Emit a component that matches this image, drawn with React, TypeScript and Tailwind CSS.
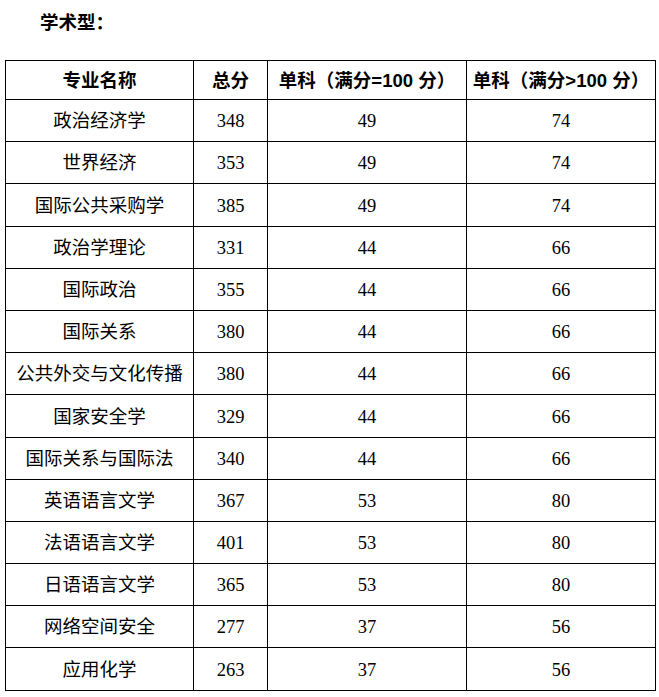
const rows: [string, number, number, number][] = [
  ["政治经济学", 348, 49, 74],
  ["世界经济", 353, 49, 74],
  ["国际公共采购学", 385, 49, 74],
  ["政治学理论", 331, 44, 66],
  ["国际政治", 355, 44, 66],
  ["国际关系", 380, 44, 66],
  ["公共外交与文化传播", 380, 44, 66],
  ["国家安全学", 329, 44, 66],
  ["国际关系与国际法", 340, 44, 66],
  ["英语语言文学", 367, 53, 80],
  ["法语语言文学", 401, 53, 80],
  ["日语语言文学", 365, 53, 80],
  ["网络空间安全", 277, 37, 56],
  ["应用化学", 263, 37, 56],
];

const serif = "font-['Liberation_Serif','Noto_Sans_CJK_SC',serif]";
const sans = "font-['Liberation_Sans','Noto_Sans_CJK_SC',sans-serif]";

export default function App() {
  return (
    <div className="w-[659px] h-[697px] bg-white text-black">
      <div className={`pl-[40px] pt-[9px] h-[60px] text-[18.5px] font-bold ${sans}`}>
        学术型：
      </div>
      <table className="ml-[5px] w-[650px] border-collapse table-fixed">
        <colgroup>
          <col className="w-[188px]" />
          <col className="w-[74px]" />
          <col className="w-[199px]" />
          <col className="w-[189px]" />
        </colgroup>
        <thead>
          <tr className={`h-[39px] text-[18.5px] font-bold ${sans}`}>
            <th className="border-[1.5px] border-black p-0 pt-[2px] text-center">专业名称</th>
            <th className="border-[1.5px] border-black p-0 pt-[2px] text-center">总分</th>
            <th className="border-[1.5px] border-black p-0 pt-[2px] text-center whitespace-nowrap">
              单科（满分=100 分）
            </th>
            <th className="border-[1.5px] border-black p-0 pt-[2px] text-center whitespace-nowrap">
              单科（满分&gt;100 分）
            </th>
          </tr>
        </thead>
        <tbody>
          {rows.map(([name, total, a, b]) => (
            <tr key={name} className={`h-[42.2px] text-[18.5px] ${serif}`}>
              <td className="border-[1.5px] border-black p-0 pt-[3px] text-center whitespace-nowrap">{name}</td>
              <td className="border-[1.5px] border-black p-0 pt-[3px] text-center">{total}</td>
              <td className="border-[1.5px] border-black p-0 pt-[3px] text-center">{a}</td>
              <td className="border-[1.5px] border-black p-0 pt-[3px] text-center">{b}</td>
            </tr>
          ))}
        </tbody>
      </table>
    </div>
  );
}
